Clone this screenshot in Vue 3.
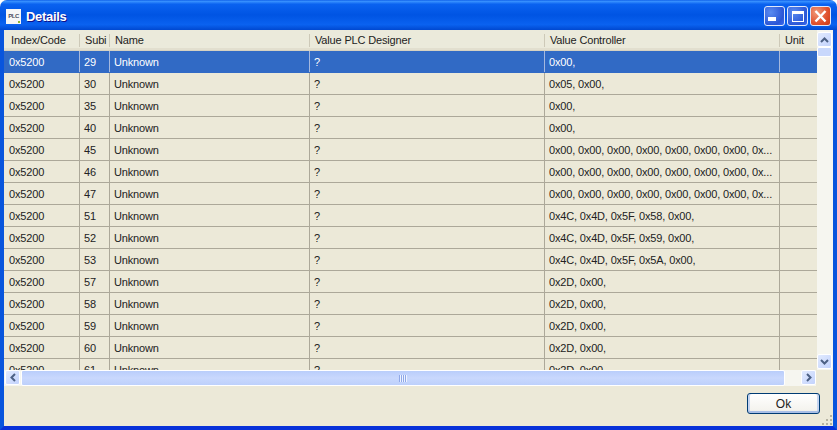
<script setup>
const filler = '0x00, 0x00, 0x00, 0x00, 0x00, 0x00, 0x00, 0x...'
const rows = [
  [29, '0x00,'], [30, '0x05, 0x00,'], [35, '0x00,'], [40, '0x00,'],
  [45, filler], [46, filler], [47, filler],
  [51, '0x4C, 0x4D, 0x5F, 0x58, 0x00,'], [52, '0x4C, 0x4D, 0x5F, 0x59, 0x00,'], [53, '0x4C, 0x4D, 0x5F, 0x5A, 0x00,'],
  [57, '0x2D, 0x00,'], [58, '0x2D, 0x00,'], [59, '0x2D, 0x00,'], [60, '0x2D, 0x00,'], [61, '0x2D, 0x00,']
]
const headers = ['Index/Code', 'Subi', 'Name', 'Value PLC Designer', 'Value Controller', 'Unit']
</script>

<template>
  <div class="window">
    <header class="titlebar">
      <div class="app-icon"><span>PLC</span><i class="app-dot"></i></div>
      <span class="title">Details</span>
      <div class="controls">
        <button class="ctl"><svg width="21" height="21" viewBox="0 0 21 21"><rect x="4" y="11" width="8" height="4" fill="#fff"/></svg></button>
        <button class="ctl"><svg width="21" height="21" viewBox="0 0 21 21"><rect x="5.500" y="5.500" width="11" height="10" fill="none" stroke="#fff"/><rect x="5" y="5" width="12" height="3" fill="#fff"/></svg></button>
        <button class="ctl close"><svg width="21" height="21" viewBox="0 0 21 21"><path d="M5.500 5l10 10.500M15.500 5l-10 10.500" stroke="#fff" stroke-width="2.400" fill="none"/></svg></button>
      </div>
    </header>
    <div class="body">
      <div class="grid-wrap">
        <div class="table">
          <div class="thead">
            <div v-for="h in headers" :key="h" class="th">{{ h }}</div>
          </div>
          <div v-for="(r, i) in rows" :key="r[0]" class="tr" :class="{ sel: i === 0 }">
            <div class="td">0x5200</div>
            <div class="td">{{ r[0] }}</div>
            <div class="td">Unknown</div>
            <div class="td">?</div>
            <div class="td">{{ r[1] }}</div>
            <div class="td"></div>
          </div>
        </div>
        <div class="vscroll">
          <div class="sbtn"><svg width="9" height="6" viewBox="0 0 9 6"><path d="M1 5l3.500-3.500L8 5" fill="none" stroke="#4d6185" stroke-width="2"/></svg></div>
          <div class="vthumb"></div>
          <div class="spacer"></div>
          <div class="sbtn"><svg width="9" height="6" viewBox="0 0 9 6"><path d="M1 1l3.500 3.500L8 1" fill="none" stroke="#4d6185" stroke-width="2"/></svg></div>
        </div>
      </div>
      <div class="hrow">
        <div class="hscroll">
          <div class="sbtn"><svg width="6" height="9" viewBox="0 0 6 9"><path d="M5 1L1.500 4.500 5 8" fill="none" stroke="#4d6185" stroke-width="2"/></svg></div>
          <div class="hthumb"><span class="grip"></span></div>
          <div class="spacer"></div>
          <div class="sbtn"><svg width="6" height="9" viewBox="0 0 6 9"><path d="M1 1l3.500 3.500L1 8" fill="none" stroke="#4d6185" stroke-width="2"/></svg></div>
        </div>
      </div>
      <footer class="footer">
        <button class="ok">Ok</button>
        <svg class="resize" width="12" height="12" viewBox="0 0 12 12" fill="#b5b2a1">
          <rect x="9" y="1" width="2" height="2"/><rect x="5" y="5" width="2" height="2"/><rect x="9" y="5" width="2" height="2"/>
          <rect x="1" y="9" width="2" height="2"/><rect x="5" y="9" width="2" height="2"/><rect x="9" y="9" width="2" height="2"/>
        </svg>
      </footer>
    </div>
  </div>
</template>

<style>
html, body { margin: 0; background: #fff; }
</style>

<style scoped>
.window {
  width: 837px; height: 430px; display: flex; flex-direction: column;
  font: 11px "Liberation Sans", Arial, sans-serif; letter-spacing: -.16px; color: #222; overflow: hidden;
  background: #ece9d8; border-radius: 7px 7px 0 0;
}
.titlebar {
  height: 30px; flex: none; box-sizing: border-box; display: flex; align-items: center; padding: 2px 6px 0 6px;
  background: linear-gradient(#0a5ae6 0, #3a93ff 4%, #0a62f0 14%, #0054e3 50%, #0a62f0 82%, #0048d0 100%);
}
.app-icon {
  width: 15px; height: 15px; background: #f6f6f6; box-sizing: border-box; position: relative;
  display: flex; align-items: center; justify-content: center; overflow: hidden;
}
.app-icon span { font-size: 6px; font-weight: 700; color: #4a4f60; letter-spacing: -.5px; }
.app-dot { position: absolute; right: 1px; bottom: 1px; width: 2px; height: 2px; background: #8fb52e; }
.title { margin-left: 5px; color: #fff; font-size: 13px; font-weight: 700; letter-spacing: -.3px; text-shadow: 1px 1px #0f1089; }
.controls { margin-left: auto; display: flex; gap: 2px; }
.ctl {
  width: 21px; height: 20px; padding: 0; border: 1px solid #dfe8fb; border-radius: 3px;
  background: radial-gradient(circle at 30% 30%, #5a8bf0, #2b56d6 70%, #3a6cf0);
  display: block; overflow: hidden;
}
.ctl svg { display: block; margin: -1px; }
.close { background: radial-gradient(circle at 30% 30%, #f09a7a, #e0512e 60%, #c93a16); }
.body {
  flex: 1; min-height: 0; display: flex; flex-direction: column;
  border-left: 4px solid #0855dd; border-right: 4px solid #0855dd; border-bottom: 4px solid #0831d9;
}
.grid-wrap { display: flex; height: 340px; flex: none; }
.table { width: 813px; overflow: hidden; flex: none; height: 340px; }
.thead {
  display: flex; height: 21px; background: #ebeadb; border-bottom: 1px solid #d6d2c2; box-shadow: inset 0 -2px #e2dfcf;
  box-sizing: border-box;
}
.th {
  box-sizing: border-box; padding-left: 5px; line-height: 20px; white-space: nowrap; overflow: hidden;
}
.th:first-child { padding-left: 7px; }
.th:not(:last-child) { background: linear-gradient(#cdc9b8, #cdc9b8) no-repeat right 0 top 4px / 1px 13px; }
.th:nth-child(1), .td:nth-child(1) { width: 76px; }
.th:nth-child(2), .td:nth-child(2) { width: 30px; }
.th:nth-child(3), .td:nth-child(3) { width: 200px; }
.th:nth-child(4), .td:nth-child(4) { width: 235px; }
.th:nth-child(5), .td:nth-child(5) { width: 235px; }
.th:nth-child(6), .td:nth-child(6) { width: 37px; }
.tr { display: flex; height: 22px; box-sizing: border-box; border-bottom: 1px solid #aca899; }
.td {
  box-sizing: border-box; padding-left: 4px; line-height: 22px; border-right: 1px solid #aca899; white-space: nowrap; overflow: hidden;
}
.td:first-child { padding-left: 5px; }
.td:last-child { border-right: 0; }
.sel { background: #316ac5; color: #fff; border-bottom-color: #316ac5; }
.sel .td { border-right-color: #a5b8de; }
.vscroll {
  width: 16px; flex: none; display: flex; flex-direction: column; background: #f6f6f0; box-sizing: border-box; padding: 2px 0 1px;
}
.sbtn {
  width: 15px; height: 15px; flex: none; box-sizing: border-box; border: 1px solid #fff; border-radius: 2px;
  background: linear-gradient(135deg, #e1eafe, #c3d3fd); display: flex; align-items: center; justify-content: center;
}
.vthumb { height: 10px; width: 15px; flex: none; box-sizing: border-box; border: 1px solid #fff; border-radius: 2px; background: #c9d8fc; margin-top: 0; }
.spacer { flex: 1; }
.hrow { height: 16px; flex: none; }
.hscroll { display: flex; height: 16px; width: 812px; box-sizing: border-box; background: #f6f6f0; padding-left: 1px; }
.hthumb {
  width: 764px; flex: none; margin-left: 1px; box-sizing: border-box; border: 1px solid #fff; border-radius: 2px;
  background: linear-gradient(#b9cdfb, #c9d8fd 50%, #bdd0fb); display: flex; align-items: center; justify-content: center;
}
.grip { width: 8px; height: 7px; background: repeating-linear-gradient(90deg, #8fa8e8 0 1px, #eef3ff 1px 2px); }
.footer { flex: 1; display: flex; justify-content: flex-end; align-items: flex-start; padding: 7px 13px 0 0; background: #ece9d8; position: relative; }
.ok {
  width: 73px; height: 21px; padding: 0; box-sizing: border-box; border: 1px solid #003c74; border-radius: 3px;
  background: linear-gradient(#fff, #f4f3ee 85%, #dcd8ce); box-shadow: inset 0 -2px #a9bfe6, inset 2px 0 #c6d5f0, inset -2px 0 #c6d5f0;
  font: 12px "Liberation Sans", Arial, sans-serif; color: #222;
}
.resize { position: absolute; right: 0; bottom: 0; }
</style>
